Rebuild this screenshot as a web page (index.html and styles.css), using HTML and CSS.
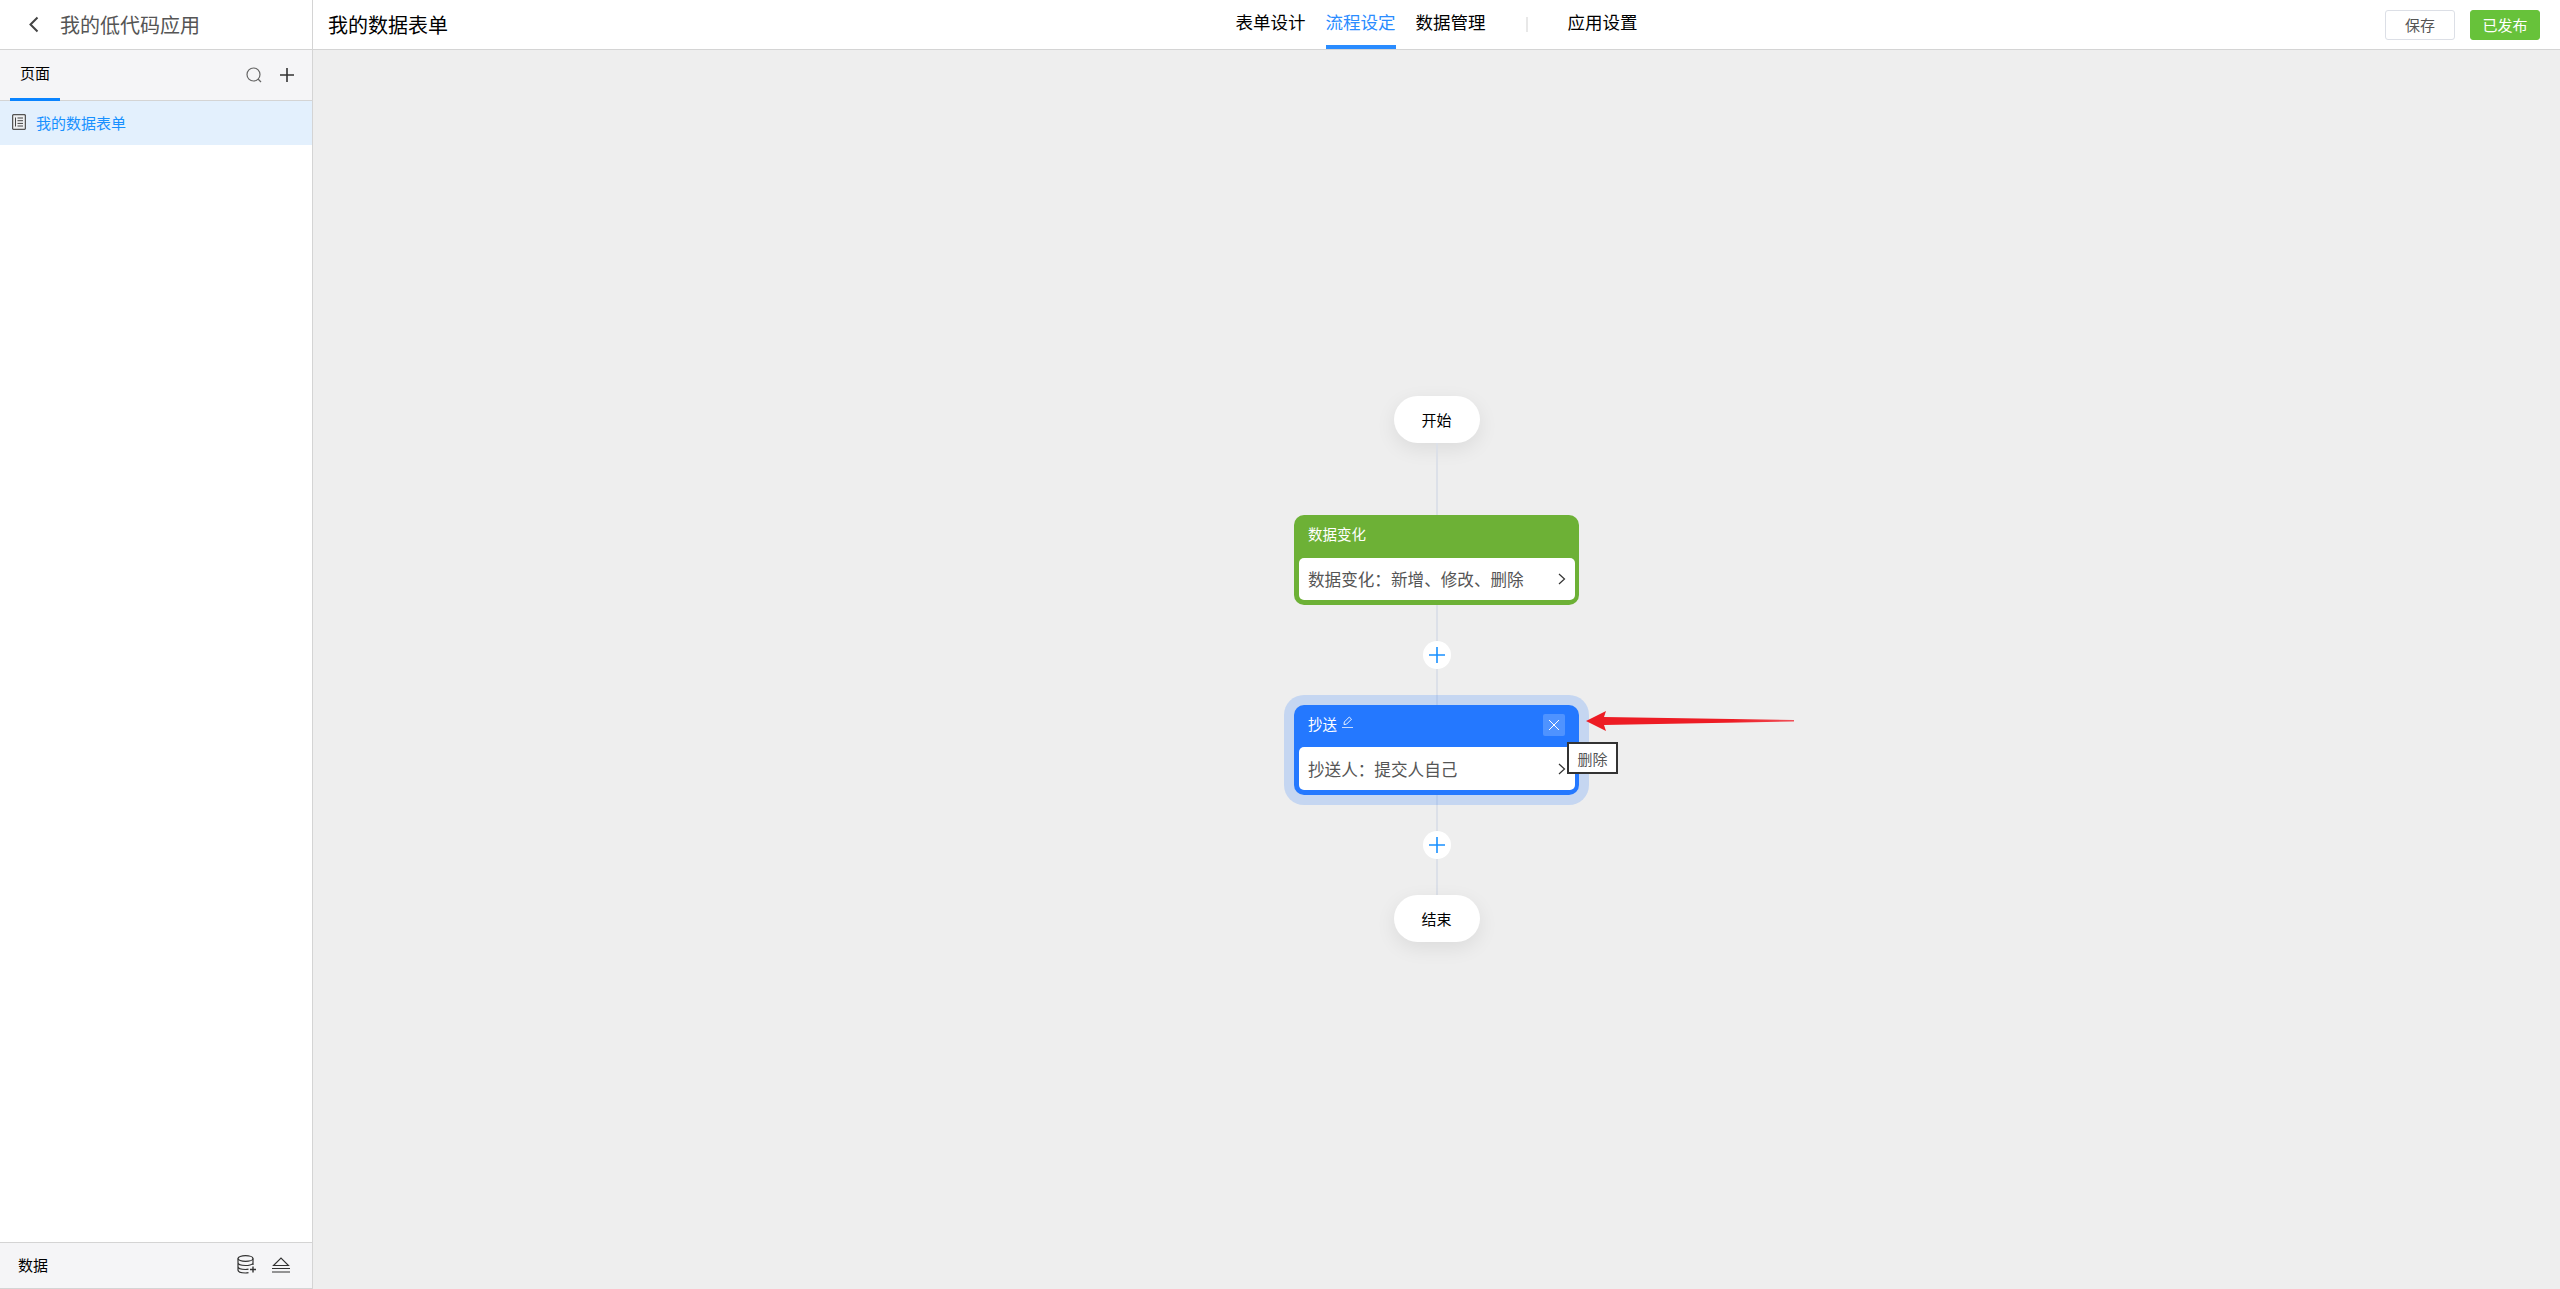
FILE: index.html
```html
<!DOCTYPE html>
<html lang="zh-CN">
  <head>
    <meta charset="UTF-8" />
    <meta name="viewport" content="width=device-width, initial-scale=1.0" />
    <title>流程设定</title>
    <link rel="stylesheet" href="styles.css">
  </head>
  <body>
    <div class="app">
      <aside class="sidebar">
        <div class="app-title">
          <svg class="back-icon" width="12" height="17" viewBox="0 0 12 17">
            <path d="M9.5 1.5 L2.5 8.5 L9.5 15.5" fill="none" stroke="#444" stroke-width="2" />
          </svg>
          <span>我的低代码应用</span>
        </div>

        <div class="side-tabs">
          <div class="side-tab">页面</div>
          <div class="side-actions">
            <svg width="16" height="16" viewBox="0 0 16 16">
              <circle cx="7.5" cy="7.5" r="6.5" fill="none" stroke="#666" stroke-width="1.2" />
              <path d="M12 12 L15 15" stroke="#666" stroke-width="1.2" />
            </svg>
            <svg width="14" height="14" viewBox="0 0 14 14">
              <path d="M7 0 V14 M0 7 H14" stroke="#333" stroke-width="1.6" />
            </svg>
          </div>
        </div>

        <div class="page-item">
          <svg width="14" height="16" viewBox="0 0 14 16">
            <rect x="0.6" y="0.6" width="12.8" height="14.8" rx="1.2" fill="#eef0f2" stroke="#555" stroke-width="1.3" />
            <path d="M5.5 4 H11 M5.5 6.7 H11 M5.5 9.4 H11 M5.5 12 H11 M3.5 3.5 V12.5" stroke="#444" stroke-width="1" />
          </svg>
          <span>我的数据表单</span>
        </div>

        <div class="side-footer">
          <span>数据</span>
          <div class="side-actions footer-actions">
            <svg width="20" height="19" viewBox="0 0 20 19">
              <ellipse cx="8.5" cy="3.5" rx="7.5" ry="2.8" fill="none" stroke="#333" stroke-width="1.2" />
              <path d="M1 3.5 V15 C1 16.8 4.5 18 8.5 18 C9.5 18 10.5 17.9 11.5 17.7 M16 3.5 V10 M1 7.5 C1 9.3 4.5 10.5 8.5 10.5 C11.5 10.5 14.5 9.8 16 8.3 M1 11.5 C1 13.3 4.5 14.5 8.5 14.5 C9.5 14.5 10.5 14.4 11.5 14.2" fill="none" stroke="#333" stroke-width="1.2" />
              <path d="M16 11.5 V17.5 M13 14.5 H19" stroke="#333" stroke-width="1.4" />
            </svg>
            <svg width="18" height="16" viewBox="0 0 18 16">
              <path d="M1.5 8.5 L9 1 L16.5 8.5 Z" fill="none" stroke="#333" stroke-width="1.1" />
              <path d="M0 11.5 H18 M0 15 H18" stroke="#333" stroke-width="1.2" />
            </svg>
          </div>
        </div>
      </aside>

      <main class="main">
        <header class="topbar">
          <div class="form-title">我的数据表单</div>
          <nav class="nav">
            <a class="nav-item">表单设计</a>
            <a class="nav-item active">流程设定</a>
            <a class="nav-item">数据管理</a>
            <span class="nav-divider"></span>
            <a class="nav-item">应用设置</a>
          </nav>
          <div class="top-buttons">
            <button class="btn">保存</button>
            <button class="btn btn-green">已发布</button>
          </div>
        </header>

        <section class="canvas">
          <div class="flow">
            <div class="pill">开始</div>
            <div class="line line-long"></div>

            <div class="node node-green">
              <div class="node-head"><span>数据变化</span></div>
              <div class="node-body">
                <span>数据变化：新增、修改、删除</span>
                <svg class="chevron" width="8" height="12" viewBox="0 0 8 12">
                  <path d="M1 1 L6.5 6 L1 11" fill="none" stroke="#333" stroke-width="1.2" />
                </svg>
              </div>
            </div>

            <div class="line"></div>
            <div class="add-btn">
              <svg width="18" height="18" viewBox="0 0 18 18">
                <path d="M9 1 V17 M1 9 H17" stroke="#1890ff" stroke-width="1.6" />
              </svg>
            </div>
            <div class="line"></div>

            <div class="node node-blue">
              <div class="node-head">
                <span>抄送</span>
                <svg class="edit-icon" width="11" height="12" viewBox="0 0 11 12">
                  <path d="M2 8.5 L2.3 6 L7.3 1 L9.5 3.2 L4.5 8.2 Z" fill="none" stroke="#fff" stroke-width="0.9" />
                  <path d="M0 11.5 H11" stroke="#c6dbff" stroke-width="1" />
                </svg>
                <div class="close-btn">
                  <svg width="12" height="12" viewBox="0 0 12 12">
                    <path d="M1 1 L11 11 M11 1 L1 11" stroke="#fff" stroke-width="1" />
                  </svg>
                </div>
              </div>
              <div class="node-body">
                <span>抄送人：提交人自己</span>
                <svg class="chevron" width="8" height="12" viewBox="0 0 8 12">
                  <path d="M1 1 L6.5 6 L1 11" fill="none" stroke="#333" stroke-width="1.2" />
                </svg>
              </div>
              <div class="tooltip">删除</div>
              <svg class="arrow" width="210" height="22" viewBox="0 0 210 22">
                <defs>
                  <linearGradient id="arrowFade" x1="0" x2="1" y1="0" y2="0">
                    <stop offset="0" stop-color="#ed1c24" />
                    <stop offset="0.7" stop-color="#ed1c24" />
                    <stop offset="1" stop-color="#f05058" />
                  </linearGradient>
                </defs>
                <path d="M0 11 L20 1 L18 7 L208 10 L208 11.5 L18 15 L20 21 Z" fill="url(#arrowFade)" />
              </svg>
            </div>

            <div class="line"></div>
            <div class="add-btn">
              <svg width="18" height="18" viewBox="0 0 18 18">
                <path d="M9 1 V17 M1 9 H17" stroke="#1890ff" stroke-width="1.6" />
              </svg>
            </div>
            <div class="line"></div>
            <div class="pill">结束</div>
          </div>
        </section>
      </main>
    </div>
  </body>
</html>
```

FILE: styles.css
```css
* {
  box-sizing: border-box;
}

body {
  margin: 0;
  font-family: "Noto Sans CJK SC", "Liberation Sans", sans-serif;
  font-size: 15px;
  color: #000;
}

.app {
  display: flex;
  height: 100vh;
}

.sidebar {
  width: 313px;
  flex-shrink: 0;
  display: flex;
  flex-direction: column;
  border-right: 1px solid #d4d4d4;
  background-color: #fff;
}

.app-title {
  height: 50px;
  flex-shrink: 0;
  display: flex;
  align-items: center;
  padding-left: 28px;
  gap: 20px;
  font-size: 20px;
  color: #555;
  border-bottom: 1px solid #d4d4d4;
}

.side-tabs {
  height: 51px;
  flex-shrink: 0;
  display: flex;
  align-items: stretch;
  justify-content: space-between;
  padding: 0 18px 0 10px;
  background-color: #f5f5f7;
  border-bottom: 1px solid #d4d4d4;
}

.side-tab {
  width: 50px;
  text-align: center;
  line-height: 46px;
  margin-bottom: -1px;
  border-bottom: 3px solid #0a84ff;
}

.side-actions {
  display: flex;
  align-items: center;
  gap: 18px;
}

.footer-actions {
  gap: 15px;
}

.page-item {
  height: 44px;
  flex-shrink: 0;
  display: flex;
  align-items: center;
  gap: 10px;
  padding: 0 0 2px 12px;
  color: #1890ff;
  background-color: #e3f0fd;
}

.side-footer {
  height: 47px;
  flex-shrink: 0;
  margin-top: auto;
  display: flex;
  align-items: center;
  justify-content: space-between;
  padding: 0 22px 2px 18px;
  background-color: #f5f5f7;
  border-top: 1px solid #d4d4d4;
  border-bottom: 1px solid #d4d4d4;
}

.main {
  flex: 1;
  min-width: 0;
  display: flex;
  flex-direction: column;
}

.topbar {
  height: 50px;
  flex-shrink: 0;
  display: grid;
  grid-template-columns: 1fr auto 1fr;
  align-items: center;
  padding: 0 20px;
  border-bottom: 1px solid #d4d4d4;
}

.form-title {
  margin-left: -5px;
  font-size: 20px;
}

.nav {
  display: flex;
  align-items: center;
  gap: 20px;
  height: 49px;
  font-size: 17.5px;
}

.nav-item {
  height: 49px;
  line-height: 44px;
  border-bottom: 4px solid transparent;
}

.nav-item.active {
  color: #2a8cff;
  border-bottom-color: #2a8cff;
}

.nav-divider {
  width: 2px;
  height: 15px;
  margin: 0 20px;
  background-color: #e8e8e8;
}

.top-buttons {
  display: flex;
  justify-content: flex-end;
  gap: 15px;
}

.btn {
  width: 70px;
  height: 30px;
  padding: 0;
  font-family: inherit;
  font-size: 15px;
  color: #555;
  background-color: #fff;
  border: 1px solid #dcdfe6;
  border-radius: 3px;
}

.btn-green {
  color: #fff;
  background-color: #67c23a;
  border-color: #67c23a;
}

.canvas {
  flex: 1;
  display: flex;
  align-items: center;
  justify-content: center;
  padding-bottom: 1px;
  background-color: #eee;
}

.flow {
  display: flex;
  flex-direction: column;
  align-items: center;
}

.pill {
  width: 86px;
  height: 47px;
  display: flex;
  align-items: center;
  justify-content: center;
  background-color: #fff;
  border-radius: 24px;
  box-shadow: 0 6px 20px rgba(0, 0, 0, 0.08);
}

.line {
  width: 2px;
  height: 36px;
  background-color: #dce0e8;
}

.line-long {
  height: 72px;
}

.add-btn {
  width: 28px;
  height: 28px;
  display: flex;
  align-items: center;
  justify-content: center;
  background-color: #fff;
  border-radius: 50%;
}

.node {
  position: relative;
  width: 285px;
  height: 90px;
  display: flex;
  flex-direction: column;
  padding: 0 4px 5px 5px;
  border-radius: 10px;
}

.node-green {
  background-color: #6db136;
}

.node-green .node-head {
  height: 43px;
}

.node-blue {
  background-color: #2478ff;
  box-shadow: 0 0 0 10px rgba(36, 120, 255, 0.2);
}

.node-head {
  height: 42px;
  display: flex;
  align-items: center;
  gap: 5px;
  padding: 0 10px 6px 9px;
  font-size: 14.5px;
  color: #fff;
}

.edit-icon {
  margin-top: -3px;
}

.close-btn {
  width: 22px;
  height: 22px;
  margin-left: auto;
  margin-top: 4px;
  display: flex;
  align-items: center;
  justify-content: center;
  background-color: rgba(255, 255, 255, 0.2);
  border-radius: 2px;
}

.node-body {
  flex: 1;
  display: flex;
  align-items: center;
  justify-content: space-between;
  padding: 0 9px;
  font-size: 16.6px;
  color: #555;
  background-color: #fff;
  border-radius: 5px;
}

.tooltip {
  position: absolute;
  left: 273px;
  top: 37px;
  width: 51px;
  height: 32px;
  display: flex;
  align-items: center;
  justify-content: center;
  color: #555;
  background-color: #fff;
  border: 2px solid #333;
}

.arrow {
  position: absolute;
  left: 292px;
  top: 5px;
}
```
